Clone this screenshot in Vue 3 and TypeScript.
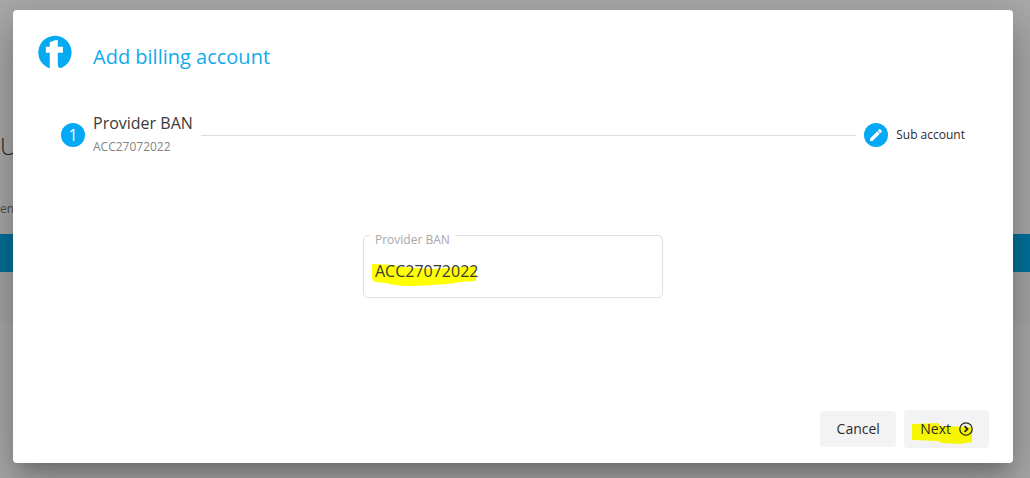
<script setup lang="ts">
import { ref } from 'vue'

const account = ref('ACC27072022')
</script>

<template>
  <div class="screen">
    <div class="page" aria-hidden="true">
      <div class="page-title">U</div>
      <div class="page-note">en</div>
      <div class="page-bar"></div>
      <div class="page-row"></div>
    </div>

    <div class="backdrop">
      <section class="dialog" role="dialog" aria-labelledby="dialog-title">
        <header class="head">
          <svg class="logo" viewBox="0 0 34 34" aria-hidden="true">
            <path
              fill="#06aaf0"
              d="M12.4 32.4A16.2 16.2 0 1 1 26.5 30.4Q24.2 32.3 22 32Q20.2 31.6 20.2 28.5V17.2H25.2V11.4H20.2V4.8L17.5 5L12.4 7V11.4H8.6V17.2H12.4Z"
            />
          </svg>
          <h1 id="dialog-title" class="title">Add billing account</h1>
        </header>

        <div class="stepper">
          <div class="step">
            <span class="badge">1</span>
            <div class="step-text">
              <span class="step-label">Provider BAN</span>
              <span class="step-sub">{{ account }}</span>
            </div>
          </div>
          <span class="line"></span>
          <div class="step">
            <span class="badge">
              <svg width="16" height="16" viewBox="0 0 24 24" aria-hidden="true">
                <path
                  fill="#fff"
                  d="M3 17.25V21h3.75L17.81 9.94l-3.75-3.75L3 17.25zM20.71 7.04a1 1 0 0 0 0-1.41l-2.34-2.34a1 1 0 0 0-1.41 0l-2.3 2.3 3.75 3.75 2.3-2.3z"
                />
              </svg>
            </span>
            <span class="step-small">Sub account</span>
          </div>
        </div>

        <div class="field">
          <label for="ban">Provider BAN</label>
          <svg class="marker" width="106" height="24" viewBox="0 0 106 24" aria-hidden="true">
            <path
              fill="#ff0"
              d="M0 1L22 2L28 4L60 6L104 3V18L88 19L76 21L60 22Q38 24 22 22L14 20L3 19L0 16Z"
            />
          </svg>
          <input id="ban" v-model="account" type="text" />
        </div>

        <footer class="actions">
          <button type="button" class="btn cancel">Cancel</button>
          <button type="button" class="btn next">
            <svg class="marker" width="60" height="22" viewBox="0 0 60 22" aria-hidden="true">
              <path fill="#f6f600" d="M0 1L26 0L28 3L60 4V19L48 21L30 20L26 18L0 17Z" />
            </svg>
            <span>Next</span>
            <svg class="arrow" width="14" height="14" viewBox="0 0 14 14" aria-hidden="true">
              <circle cx="7" cy="7" r="6.2" fill="none" stroke="#2b2b12" stroke-width="1.3" />
              <path d="M5.6 4.1L8.5 7L5.6 9.9" fill="none" stroke="#2b2b12" stroke-width="1.9" />
            </svg>
          </button>
        </footer>
      </section>
    </div>
  </div>
</template>

<style>
body {
  margin: 0;
  background: #fafafa;
}
</style>

<style scoped>
.screen {
  position: relative;
  min-height: 100vh;
  overflow: hidden;
  font-family: "Open Sans", "Noto Sans", sans-serif;
  color: #3a3a3a;
}
.page {
  position: absolute;
  inset: 0;
  padding-top: 128px;
}
.page-title {
  font-size: 24px;
  font-weight: 300;
  line-height: 36px;
}
.page-note {
  margin-top: 36px;
  font-size: 12px;
  line-height: 18px;
  color: #777;
}
.page-bar {
  margin-top: 16px;
  height: 38px;
  background: #03a9e5;
}
.page-row {
  height: 51px;
  background: #f3f3f3;
}
.backdrop {
  position: relative;
  box-sizing: border-box;
  min-height: 100vh;
  padding: 10px 17px 15px 13px;
  background: rgba(0, 0, 0, 0.32);
}
.dialog {
  box-sizing: border-box;
  padding: 24px 24px 15px;
  border-radius: 4px;
  background: #fff;
  box-shadow:
    0 11px 15px -7px rgba(0, 0, 0, 0.2),
    0 24px 38px 3px rgba(0, 0, 0, 0.14),
    0 9px 46px 8px rgba(0, 0, 0, 0.12);
}
.head {
  display: flex;
  align-items: flex-start;
  gap: 21px;
}
.logo {
  width: 35px;
  height: 35px;
  margin-top: 1px;
}
.title {
  margin: 8px 0 0;
  font-size: 20px;
  font-weight: 400;
  line-height: 30px;
  color: #12aaea;
}
.stepper {
  display: flex;
  align-items: center;
  gap: 8px;
  margin-top: 39px;
  padding: 0 24px;
}
.step {
  display: flex;
  align-items: center;
  gap: 8px;
}
.badge {
  display: flex;
  align-items: center;
  justify-content: center;
  width: 24px;
  height: 24px;
  border-radius: 50%;
  background: #03a9f4;
  color: #fff;
  font-size: 16px;
  line-height: 24px;
}
.step-text {
  display: flex;
  flex-direction: column;
}
.step-label {
  font-size: 16px;
  line-height: 24px;
}
.step-sub {
  font-size: 12px;
  line-height: 24px;
  color: #858585;
}
.step-small {
  font-size: 12px;
  line-height: 24px;
  color: #2b2b2b;
}
.line {
  flex: 1;
  height: 1px;
  background: #dcdcdc;
}
.field {
  position: relative;
  box-sizing: border-box;
  width: 300px;
  margin: 76px auto 0;
  padding: 23px 11px 14px;
  border: 1px solid #e0e0e0;
  border-radius: 5px;
}
.field label {
  position: absolute;
  left: 6px;
  top: -4px;
  padding: 0 5px;
  background: #fff;
  font-size: 12px;
  line-height: 16px;
  color: #a8a8a8;
}
.field .marker {
  position: absolute;
  left: 8px;
  top: 27px;
}
.field input {
  position: relative;
  display: block;
  box-sizing: border-box;
  width: 100%;
  height: 24px;
  padding: 0;
  border: 0;
  outline: 0;
  background: transparent;
  color: #3a3a3a;
  font: 400 16px/24px "Open Sans", "Noto Sans", sans-serif;
}
.actions {
  display: flex;
  align-items: center;
  justify-content: flex-end;
  gap: 8px;
  margin-top: 112px;
}
.btn {
  position: relative;
  display: flex;
  align-items: center;
  justify-content: center;
  padding: 0 16px;
  border: 0;
  border-radius: 4px;
  background: #f3f3f3;
  color: #2b2b2b;
  font: 400 14px/36px "Open Sans", "Noto Sans", sans-serif;
}
.cancel {
  min-width: 76px;
}
.next {
  gap: 8px;
  line-height: 38px;
}
.next .marker {
  position: absolute;
  left: 8px;
  top: 13px;
}
.next span,
.next .arrow {
  position: relative;
}
</style>
